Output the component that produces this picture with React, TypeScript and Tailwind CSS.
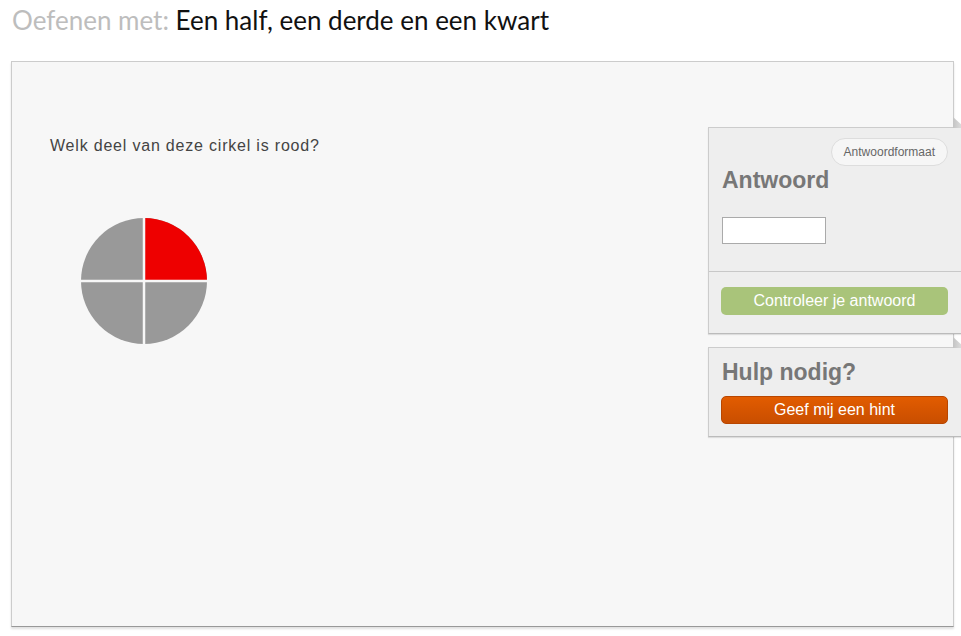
import React from "react";

function Fold() {
  return (
    <svg
      className="absolute left-[244px] top-[-11px]"
      width="12"
      height="11"
      viewBox="0 0 12 11"
    >
      <defs>
        <linearGradient id="fg" x1="0" y1="0" x2="1" y2="0">
          <stop offset="0" stopColor="#c4c4c4" />
          <stop offset="1" stopColor="#e6e6e6" />
        </linearGradient>
      </defs>
      <polygon points="0,0 12,11 0,11" fill="url(#fg)" />
    </svg>
  );
}

function Pie() {
  const r = 63;
  const c = 64;
  return (
    <svg width="128" height="128" viewBox="0 0 128 128">
      <circle cx={c} cy={c} r={r} fill="#999999" />
      <path d={`M${c},${c} L${c},${c - r} A${r},${r} 0 0 1 ${c + r},${c} Z`} fill="#ee0000" />
      <line x1={c} y1={0} x2={c} y2={128} stroke="#f7f7f7" strokeWidth="2.5" />
      <line x1={0} y1={c} x2={128} y2={c} stroke="#f7f7f7" strokeWidth="2.5" />
    </svg>
  );
}

export default function App() {
  return (
    <div className="w-[961px] h-[636px] overflow-hidden bg-white" style={{ fontFamily: "Arial, 'Liberation Sans', sans-serif" }}>
      <div className="pl-[12px] pt-[5px] h-[61px]">
        <h1 className="text-[26px] leading-[30px]" style={{ fontFamily: "Lato, 'Open Sans', sans-serif" }}>
          <span className="text-[#bdbdbd]">Oefenen met: </span>
          <span className="text-[#111]">Een half, een derde en een kwart</span>
        </h1>
      </div>
      <div className="ml-[11px] w-[943px] h-[566px] border border-[#cccccc] border-b-[#999999] bg-[#f7f7f7] shadow-[0_2px_2px_rgba(0,0,0,0.12)] flex">
        <div className="flex-1 pl-[38px] pt-[74px]">
          <p className="text-[16px] leading-[20px] text-[#444] tracking-[0.8px]">Welk deel van deze cirkel is rood?</p>
          <div className="mt-[61px] ml-[30px]">
            <Pie />
          </div>
        </div>
        <div className="w-[256px] -mr-[11px] pt-[65px] flex flex-col gap-[13px] shrink-0">
          <div className="relative bg-[#eeeeee] border border-[#cccccc] border-b-[#bbbbbb] shadow-[0_1px_1px_rgba(0,0,0,0.1)]">
            <Fold />
            <div className="px-[13px] pt-[10px] h-[144px] border-b border-[#c8c8c8]">
              <div className="flex justify-end pr-[2px]">
                <div className="h-[28px] px-[12px] rounded-full bg-[#f6f6f6] border border-[#dddddd] text-[12px] text-[#666] flex items-center">
                  Antwoordformaat
                </div>
              </div>
              <div className="text-[23px] font-bold text-[#777777] leading-[26px] mt-[1px]">Antwoord</div>
              <input className="mt-[24px] w-[104px] h-[27px] bg-white border border-[#aaaaaa] outline-none" />
            </div>
            <div className="px-[12px] pt-[15px] pb-[18px]">
              <button className="w-[227px] h-[28px] rounded-[5px] bg-[#a9c47a] text-white text-[16px] leading-[20px]">
                Controleer je antwoord
              </button>
            </div>
          </div>
          <div className="relative bg-[#eeeeee] border border-[#cccccc] border-b-[#bbbbbb] shadow-[0_1px_1px_rgba(0,0,0,0.1)] px-[12px] pt-[11px] pb-[12px]">
            <Fold />
            <div className="text-[23px] font-bold text-[#777777] leading-[26px] pl-[1px]">Hulp nodig?</div>
            <button className="mt-[11px] w-[227px] h-[28px] rounded-[5px] bg-gradient-to-b from-[#e25c00] to-[#c94e00] border border-[#b84600] text-white text-[16px] leading-[20px]">
              Geef mij een hint
            </button>
          </div>
        </div>
      </div>
    </div>
  );
}
